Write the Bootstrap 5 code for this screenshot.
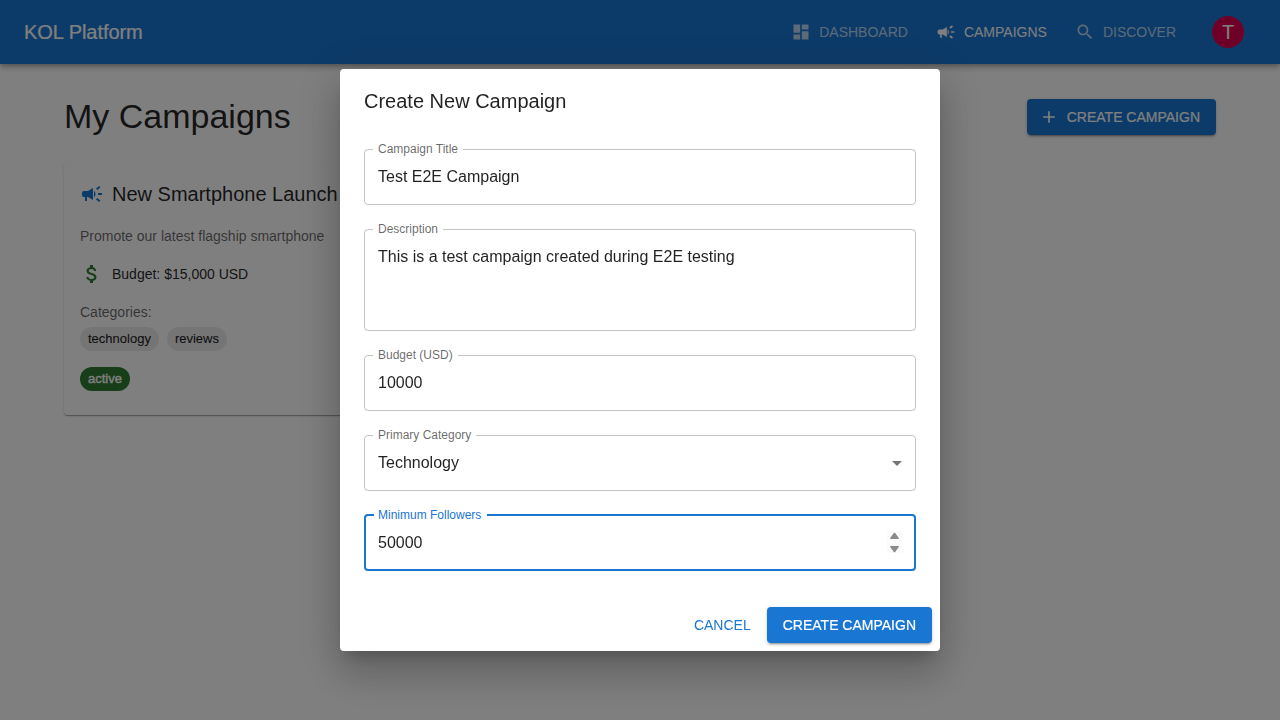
<!DOCTYPE html>
<html lang="en">
<head>
<meta charset="utf-8">
<meta name="viewport" content="width=device-width, initial-scale=1">
<title>KOL Platform</title>
<link href="https://cdn.jsdelivr.net/npm/bootstrap@5.3.0/dist/css/bootstrap.min.css" rel="stylesheet">
<style>
  :root { --brand: #1976d2; }
  body { font-family: "Liberation Sans", Arial, sans-serif; font-size: 16px; line-height: 1.5; color: rgba(0,0,0,.87); background: #fff; overflow: hidden; }
  svg { fill: currentColor; flex-shrink: 0; }

  .app-bar { height: 64px; background: var(--brand); color: #fff; z-index: 10;
    box-shadow: 0 2px 4px -1px rgba(0,0,0,.2), 0 4px 5px rgba(0,0,0,.14), 0 1px 10px rgba(0,0,0,.12); }
  .title-text { font-size: 20px; line-height: 32px; font-weight: 400; margin: 0; }
  .brand-text { letter-spacing: -.05px; -webkit-text-stroke: .2px; }
  .btn-app { --bs-btn-border-width: 0; --bs-btn-border-radius: 4px; --bs-btn-font-size: 14px; --bs-btn-line-height: 24.5px;
    --bs-btn-padding-y: 6px; --bs-btn-padding-x: 8px; --bs-btn-color: var(--brand);
    display: inline-flex; align-items: center; text-transform: uppercase; height: 36.5px; }
  .btn-app svg { margin: 0 8px 0 -4px; }
  .btn-nav { --bs-btn-color: rgba(255,255,255,.7); --bs-btn-hover-color: #fff; --bs-btn-active-color: #fff; }
  .btn-fill { --bs-btn-padding-x: 16px; --bs-btn-color: #fff; --bs-btn-bg: var(--brand); --bs-btn-hover-color: #fff; --bs-btn-hover-bg: #1565c0;
    -webkit-text-stroke: .2px;
    box-shadow: 0 3px 1px -2px rgba(0,0,0,.2), 0 2px 2px rgba(0,0,0,.14), 0 1px 5px rgba(0,0,0,.12); }
  .btn-fill svg { -webkit-text-stroke: 0; }
  .user-avatar { width: 32px; height: 32px; background: #dc004e; font-size: 20px; line-height: 1; margin: 0 12px; }

  .page { padding: 32px 64px; }
  .page-title { font-size: 34px; line-height: 40px; padding-bottom: 2px; font-weight: 400; }
  .campaign { --bs-card-border-width: 0; --bs-card-border-radius: 4px; --bs-card-color: rgba(0,0,0,.87); width: 368px;
    box-shadow: 0 2px 1px -1px rgba(0,0,0,.2), 0 1px 1px rgba(0,0,0,.14), 0 1px 3px rgba(0,0,0,.12); }
  .small-text { font-size: 14px; line-height: 20px; }
  .category-label { margin-bottom: 5px; }
  .muted { color: rgba(0,0,0,.6); }
  .chip { height: 24px; line-height: 24px; padding: 0 8px; font-size: 13px; background: rgba(0,0,0,.08); -webkit-text-stroke: .15px; }
  .chip-active { background: #2e7d32; color: #fff; -webkit-text-stroke: .4px; }

  .modal { --bs-modal-width: 600px; --bs-modal-border-radius: 4px; --bs-modal-border-width: 0; --bs-modal-color: rgba(0,0,0,.87); }
  .modal-content { box-shadow: 0 11px 15px -7px rgba(0,0,0,.2), 0 24px 38px 3px rgba(0,0,0,.14), 0 9px 46px 8px rgba(0,0,0,.12); }
  .field-box { position: relative; height: 56px; border: 1px solid rgba(0,0,0,.23); border-radius: 4px; }
  .field-box > label { position: absolute; top: -9px; left: 8px; padding: 0 5px; background: #fff; color: rgba(0,0,0,.6);
    font-size: 12px; line-height: 17px; white-space: nowrap; }
  .field-box input, .field-box textarea, .field-box select { display: block; width: 100%; height: 100%; border: 0; outline: 0; background: none;
    padding: 0 13px; font: inherit; line-height: 23px; color: rgba(0,0,0,.87); resize: none; appearance: none; caret-color: transparent; }
  .field-box input[type=number] { appearance: textfield; }
  .field-tall { height: 102px; }
  .field-tall textarea { padding-top: 15.5px; overflow: hidden; }
  .field-box svg { position: absolute; right: 6px; top: 15px; color: rgba(0,0,0,.54); pointer-events: none; }
  .field-on { border: 2px solid var(--brand); height: 57px; margin-top: -1px; }
  .field-on > label { color: var(--brand); left: 8px; padding: 0 6px 0 4px; }
  .field-on input { padding: 1px 12px 0; }
  .field-box .stepper { right: 12px; top: 15px; color: #8b8b8b; background: #fbfbfb; }
</style>
</head>
<body>
<header class="app-bar position-relative d-flex align-items-center px-4">
  <h1 class="title-text brand-text flex-grow-1">KOL Platform</h1>
  <nav class="d-flex align-items-center gap-3">
    <a class="btn btn-app btn-nav" href="#"><svg width="20" height="20" viewBox="0 0 24 24"><path d="M3 13h8V3H3v10zm0 8h8v-6H3v6zm10 0h8V11h-8v10zm0-18v6h8V3h-8z"/></svg>Dashboard</a>
    <a class="btn btn-app btn-nav text-white" href="#"><svg width="20" height="20" viewBox="0 0 24 24"><path d="M18 11v2h4v-2h-4zm-2 6.61c.96.71 2.21 1.65 3.2 2.39.4-.53.8-1.07 1.2-1.6-.99-.74-2.24-1.68-3.2-2.4-.4.54-.8 1.08-1.2 1.61zM20.4 5.6c-.4-.53-.8-1.07-1.2-1.6-.99.74-2.24 1.68-3.2 2.4.4.53.8 1.07 1.2 1.6.96-.72 2.21-1.65 3.2-2.4zM4 9c-1.1 0-2 .9-2 2v2c0 1.1.9 2 2 2h1v4h2v-4h1l5 3V6L8 9H4zm11.5 3c0-1.33-.58-2.53-1.5-3.35v6.69c.92-.81 1.5-2.01 1.5-3.34z"/></svg>Campaigns</a>
    <a class="btn btn-app btn-nav" href="#"><svg width="20" height="20" viewBox="0 0 24 24"><path d="M15.5 14h-.79l-.28-.27C15.41 12.59 16 11.11 16 9.5 16 5.91 13.09 3 9.5 3S3 5.91 3 9.5 5.91 16 9.5 16c1.61 0 3.09-.59 4.23-1.57l.27.28v.79l5 4.99L20.49 19l-4.99-5zm-6 0C7.01 14 5 11.99 5 9.5S7.01 5 9.5 5 14 7.01 14 9.5 11.99 14 9.5 14z"/></svg>Discover</a>
    <div class="user-avatar rounded-circle d-flex align-items-center justify-content-center">T</div>
  </nav>
</header>

<main class="page">
  <div class="d-flex align-items-center justify-content-between mb-4">
    <h2 class="page-title mb-0">My Campaigns</h2>
    <button class="btn btn-app btn-fill" type="button"><svg width="20" height="20" viewBox="0 0 24 24"><path d="M19 13h-6v6h-2v-6H5v-2h6V5h2v6h6v2z"/></svg>Create Campaign</button>
  </div>
  <article class="card campaign">
    <div class="card-body p-3 pb-4">
      <div class="d-flex align-items-center gap-2 mb-3">
        <svg width="24" height="24" viewBox="0 0 24 24" style="color:#1976d2"><path d="M18 11v2h4v-2h-4zm-2 6.61c.96.71 2.21 1.65 3.2 2.39.4-.53.8-1.07 1.2-1.6-.99-.74-2.24-1.68-3.2-2.4-.4.54-.8 1.08-1.2 1.61zM20.4 5.6c-.4-.53-.8-1.07-1.2-1.6-.99.74-2.24 1.68-3.2 2.4.4.53.8 1.07 1.2 1.6.96-.72 2.21-1.65 3.2-2.4zM4 9c-1.1 0-2 .9-2 2v2c0 1.1.9 2 2 2h1v4h2v-4h1l5 3V6L8 9H4zm11.5 3c0-1.33-.58-2.53-1.5-3.35v6.69c.92-.81 1.5-2.01 1.5-3.34z"/></svg>
        <h3 class="title-text">New Smartphone Launch</h3>
      </div>
      <p class="small-text muted mb-3">Promote our latest flagship smartphone</p>
      <div class="d-flex align-items-center gap-2 mb-3">
        <svg width="24" height="24" viewBox="0 0 24 24" style="color:#2e7d32"><path d="M11.8 10.9c-2.27-.59-3-1.2-3-2.15 0-1.09 1.01-1.85 2.7-1.85 1.78 0 2.44.85 2.5 2.1h2.21c-.07-1.72-1.12-3.3-3.21-3.81V3h-3v2.16c-1.94.42-3.5 1.68-3.5 3.61 0 2.31 1.91 3.46 4.7 4.13 2.5.6 3 1.48 3 2.41 0 .69-.49 1.79-2.7 1.79-2.06 0-2.87-.92-2.98-2.1h-2.2c.12 2.19 1.76 3.42 3.68 3.83V21h3v-2.15c1.95-.37 3.5-1.5 3.5-3.55 0-2.84-2.43-3.81-4.7-4.4z"/></svg>
        <span class="small-text">Budget: $15,000 USD</span>
      </div>
      <div class="small-text muted category-label">Categories:</div>
      <div class="d-flex gap-2 mb-3">
        <span class="chip rounded-pill">technology</span>
        <span class="chip rounded-pill">reviews</span>
      </div>
      <div class="d-flex"><span class="chip chip-active rounded-pill">active</span></div>
    </div>
  </article>
</main>

<div class="modal-backdrop show"></div>
<div class="modal d-block" tabindex="-1" role="dialog" aria-modal="true">
  <div class="modal-dialog modal-dialog-centered my-0 vh-100">
    <form class="modal-content">
      <h2 class="title-text px-4 py-3">Create New Campaign</h2>
      <div class="d-flex flex-column gap-4 px-4 pt-3 pb-4">
        <div class="field-box"><label for="f1">Campaign Title</label><input id="f1" value="Test E2E Campaign"></div>
        <div class="field-box field-tall"><label for="f2">Description</label><textarea id="f2">This is a test campaign created during E2E testing</textarea></div>
        <div class="field-box"><label for="f3">Budget (USD)</label><input id="f3" type="number" value="10000"></div>
        <div class="field-box"><label for="f4">Primary Category</label><select id="f4"><option>Technology</option></select>
          <svg width="24" height="24" viewBox="0 0 24 24"><path d="M7 10l5 5 5-5z"/></svg></div>
        <div class="field-box field-on"><label for="f5">Minimum Followers</label><input id="f5" type="number" value="50000">
          <svg class="stepper" width="15" height="22" viewBox="0 0 15 22"><path d="M7 1.8h1L11.8 7v1H3.2V7zM7 21.2h1l3.8-5.2v-1H3.2v1z"/></svg></div>
      </div>
      <div class="d-flex justify-content-end gap-2 p-2 mt-1">
        <button class="btn btn-app" type="button">Cancel</button>
        <button class="btn btn-app btn-fill" type="button">Create Campaign</button>
      </div>
    </form>
  </div>
</div>
<script src="https://cdn.jsdelivr.net/npm/bootstrap@5.3.0/dist/js/bootstrap.bundle.min.js"></script>
</body>
</html>
